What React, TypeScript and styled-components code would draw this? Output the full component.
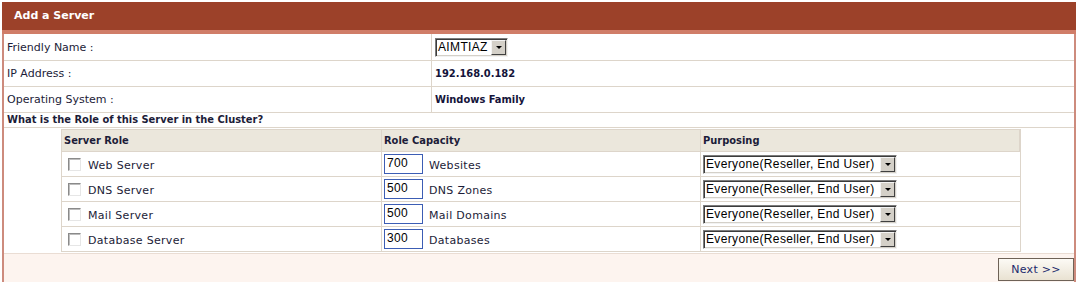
import React from 'react';
import styled, { createGlobalStyle } from 'styled-components';

const GlobalStyle = createGlobalStyle`
  html, body { margin: 0; padding: 0; background: #fff; }
  body {
    font-family: "DejaVu Sans", Verdana, sans-serif;
    font-size: 11px;
    color: #1c1c38;
  }
`;

const Panel = styled.div`
  margin: 2px 0 0 2px;
  width: 1074px;
`;

const Header = styled.div`
  height: 28px;
  background: #9c4129;
  color: #fff;
  font-weight: bold;
  font-size: 11px;
  line-height: 28px;
  padding-left: 12px;
  border-bottom: 4px solid #d07d68;
`;

const Body = styled.div`
  border-left: 2px solid #cd8b7d;
  border-right: 2px solid #cd8b7d;
  border-bottom: 2px solid #cd8b7d;
`;

const InfoRow = styled.div<{ $first?: boolean }>`
  display: grid;
  grid-template-columns: 428px 1fr;
  height: ${(p) => (p.$first ? 26 : 25)}px;
  border-bottom: 1px solid #ddd5ca;
`;

const Label = styled.div`
  display: flex;
  align-items: center;
  padding-left: 3px;
  border-right: 1px solid #ddd5ca;
`;

const Value = styled.div`
  display: flex;
  align-items: center;
  padding-left: 3px;
  font-weight: bold;
  font-family: "DejaVu Sans Condensed", "DejaVu Sans", sans-serif;
  color: #14143a;
`;

const Question = styled.div`
  height: 14px;
  line-height: 14px;
  padding-left: 3px;
  font-weight: bold;
  font-family: "DejaVu Sans Condensed", "DejaVu Sans", sans-serif;
  border-bottom: 1px solid #ddd5ca;
`;

const RolesArea = styled.div`
  padding: 1px 0 1px 57px;
  border-bottom: 1px solid #eaddd4;
`;

const RolesGrid = styled.div`
  width: 958px;
  display: grid;
  grid-template-columns: 320px 319px 1fr;
  border: 1px solid #ddd5ca;
  border-bottom: none;
`;

const HeadCell = styled.div`
  height: 21px;
  display: flex;
  align-items: center;
  padding-left: 2px;
  background: #ebe7dc;
  font-weight: bold;
  font-family: "DejaVu Sans Condensed", "DejaVu Sans", sans-serif;
  border-right: 1px solid #ddd5ca;
  &:last-child { border-right: none; }
`;

const Cell = styled.div<{ $pad?: number; $last?: boolean }>`
  height: 24px;
  display: flex;
  align-items: center;
  gap: 6px;
  padding-left: ${(p) => p.$pad ?? 2}px;
  border-top: 1px solid #ddd5ca;
  border-bottom: ${(p) => (p.$last ? '1px solid #ddd5ca' : 'none')};
  border-right: 1px solid #ddd5ca;
  &:nth-child(3n) { border-right: none; }
`;

const Check = styled.span`
  width: 13px;
  height: 13px;
  box-sizing: border-box;
  background: #fff;
  border: 1px solid;
  border-color: #8a8a8a #e6e6e6 #e6e6e6 #8a8a8a;
  box-shadow: inset 1px 1px 0 #bdbdbd;
  margin-right: 1px;
`;

const RoleName = styled.span`
  padding-top: 2px;
  letter-spacing: 0.3px;
`;

const NumInput = styled.input`
  width: 39px;
  height: 20px;
  box-sizing: border-box;
  border: 1px solid #3c5db4;
  padding: 0 2px 3px;
  font: 12px "Liberation Sans", Arial, sans-serif;
  letter-spacing: 0.3px;
  color: #000;
  outline: none;
`;

const Unit = styled.span`
  padding-top: 3px;
  letter-spacing: 0.3px;
`;

const SelectBox = styled.div<{ $w: number }>`
  display: inline-flex;
  align-items: center;
  width: ${(p) => p.$w}px;
  height: 19px;
  box-sizing: border-box;
  background: #fff;
  border: 1px solid;
  border-color: #7c7c7c #f2f2f2 #f2f2f2 #7c7c7c;
  box-shadow: inset 1px 1px 0 #3c3c3c, inset -1px -1px 0 #d4d0c8;
  font: 12px "Liberation Sans", Arial, sans-serif;
  letter-spacing: 0.35px;
  color: #000;
`;

const SelectText = styled.span`
  flex: 1;
  padding-left: 2px;
  white-space: nowrap;
`;

const Arrow = styled.span`
  width: 15px;
  height: 15px;
  margin-right: 1px;
  box-sizing: border-box;
  background: #d4d0c8;
  border: 1px solid;
  border-color: #f4f4f4 #404040 #404040 #f4f4f4;
  display: flex;
  align-items: center;
  justify-content: center;
  &::after {
    content: '';
    border-left: 3px solid transparent;
    border-right: 3px solid transparent;
    border-top: 3px solid #000;
    margin-top: 1px;
  }
`;

const Footer = styled.div`
  height: 29px;
  background: #fdf4ef;
  display: flex;
  align-items: center;
  justify-content: flex-end;
`;

const NextButton = styled.button`
  width: 76px;
  height: 23px;
  border: 1px solid #6e6257;
  background: linear-gradient(#fcfaf5, #e9e2d2);
  color: #1b2a6b;
  font: 11px "DejaVu Sans", Verdana, sans-serif;
  letter-spacing: 0.3px;
  padding: 0;
  margin-top: 1px;
`;

const Select = ({ w, text }: { w: number; text: string }) => (
  <SelectBox $w={w}>
    <SelectText>{text}</SelectText>
    <Arrow />
  </SelectBox>
);

const roles = [
  { name: 'Web Server', cap: '700', unit: 'Websites' },
  { name: 'DNS Server', cap: '500', unit: 'DNS Zones' },
  { name: 'Mail Server', cap: '500', unit: 'Mail Domains' },
  { name: 'Database Server', cap: '300', unit: 'Databases' },
];

export default function App() {
  return (
    <>
      <GlobalStyle />
      <Panel>
        <Header>Add a Server</Header>
        <Body>
          <InfoRow $first>
            <Label>Friendly Name :</Label>
            <Value>
              <Select w={73} text="AIMTIAZ" />
            </Value>
          </InfoRow>
          <InfoRow>
            <Label>IP Address :</Label>
            <Value>192.168.0.182</Value>
          </InfoRow>
          <InfoRow>
            <Label>Operating System :</Label>
            <Value>Windows Family</Value>
          </InfoRow>
          <Question>What is the Role of this Server in the Cluster?</Question>
          <RolesArea>
            <RolesGrid>
              <HeadCell>Server Role</HeadCell>
              <HeadCell>Role Capacity</HeadCell>
              <HeadCell>Purposing</HeadCell>
              {roles.map((r, i) => {
                const last = i === roles.length - 1;
                return (
                  <React.Fragment key={r.name}>
                    <Cell $pad={6} $last={last}>
                      <Check />
                      <RoleName>{r.name}</RoleName>
                    </Cell>
                    <Cell $last={last}>
                      <NumInput defaultValue={r.cap} />
                      <Unit>{r.unit}</Unit>
                    </Cell>
                    <Cell $last={last}>
                      <Select w={194} text="Everyone(Reseller, End User)" />
                    </Cell>
                  </React.Fragment>
                );
              })}
            </RolesGrid>
          </RolesArea>
          <Footer>
            <NextButton>Next &gt;&gt;</NextButton>
          </Footer>
        </Body>
      </Panel>
    </>
  );
}
